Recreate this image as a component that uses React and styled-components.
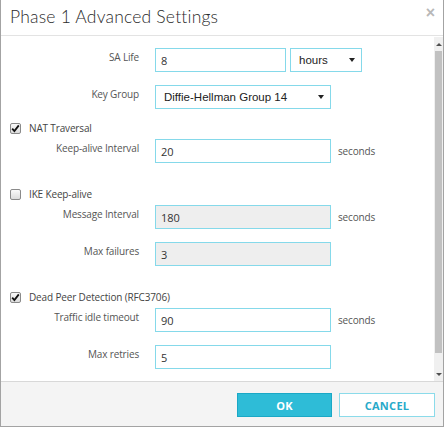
import React from "react";
import styled, { createGlobalStyle } from "styled-components";

const GlobalStyle = createGlobalStyle`
  html, body {
    margin: 0;
    padding: 0;
    background: #fff;
  }
  body {
    font-family: "Open Sans", "Liberation Sans", sans-serif;
  }
`;

const Dialog = styled.div`
  width: 444px;
  height: 427px;
  box-sizing: border-box;
  border: 1px solid #a3a3a3;
  border-top: none;
  display: flex;
  flex-direction: column;
  background: #fff;
`;

const Header = styled.div`
  height: 36px;
  flex: none;
  box-sizing: border-box;
  border-bottom: 1px solid #e3e3e3;
  display: flex;
  align-items: center;
  justify-content: space-between;
  padding: 0 8px 2px 9px;
`;

const Title = styled.h1`
  margin: 0;
  font-family: "Lato", "Open Sans", sans-serif;
  font-weight: 300;
  font-size: 17.5px;
  color: #2a2a2a;
  letter-spacing: 0.2px;
`;

const Close = styled.span`
  font-family: "Liberation Sans", sans-serif;
  font-size: 16px;
  font-weight: 700;
  color: #b8b8b8;
  margin-top: -8px;
`;

const Middle = styled.div`
  flex: 1;
  display: flex;
  min-height: 0;
`;

const Content = styled.div`
  flex: 1;
  padding-top: 12px;
`;

const ScrollBar = styled.div`
  width: 9px;
  flex: none;
  display: flex;
  flex-direction: column;
  background: #f0f0f0;
  margin-top: 1px;
`;

const ScrollBtn = styled.div`
  height: 14px;
  display: flex;
  align-items: center;
  justify-content: center;
  background: #f0f0f0;
  &::after {
    content: "";
    border-left: 3px solid transparent;
    border-right: 3px solid transparent;
    ${(p) =>
      p.$down
        ? "border-top: 3px solid #505050;"
        : "border-bottom: 3px solid #505050;"}
  }
`;

const Thumb = styled.div`
  height: 302px;
  background: #c1c1c1;
  margin: 0 1px 0 1px;
`;

const Track = styled.div`
  flex: 1;
`;

const Row = styled.div`
  display: flex;
  align-items: center;
  height: 24px;
  margin-top: ${(p) => p.$gap ?? 13}px;
`;

const Label = styled.label`
  width: 138px;
  margin-right: 16px;
  text-align: right;
  font-size: 10px;
  letter-spacing: -0.15px;
  color: #555;
  flex: none;
  margin-top: -6px;
`;

const Input = styled.div`
  width: ${(p) => p.$w ?? 176}px;
  height: 24px;
  box-sizing: border-box;
  border: 1px solid #85d9ea;
  background: ${(p) => (p.$disabled ? "#eeeeee" : "#fff")};
  display: flex;
  align-items: center;
  padding-left: 5px;
  font-size: 11px;
  color: #333;
`;

const Select = styled(Input)`
  padding: 0 6px 0 8px;
  justify-content: space-between;
  margin-left: ${(p) => p.$ml ?? 0}px;
  font-family: "Liberation Sans", sans-serif;
  font-size: 11.5px;
  color: #222;
  &::after {
    content: "";
    border-left: 3px solid transparent;
    border-right: 3px solid transparent;
    border-top: 4px solid #222;
  }
`;

const Unit = styled.span`
  margin-left: 7px;
  font-size: 10px;
  letter-spacing: -0.15px;
  color: #555;
`;

const CheckRow = styled.div`
  display: flex;
  align-items: center;
  height: 18px;
  margin-top: ${(p) => p.$gap}px;
  margin-bottom: 2px;
  padding-left: 9px;
  font-size: 10px;
  letter-spacing: -0.15px;
  color: #444;
`;

const Box = styled.span`
  width: 11px;
  height: 11px;
  box-sizing: border-box;
  border: 1px solid #8a8a8a;
  border-radius: 2px;
  background: linear-gradient(#fafafa, #dcdcdc);
  margin-right: 8px;
  display: flex;
  align-items: center;
  justify-content: center;
`;

const Footer = styled.div`
  height: 45px;
  flex: none;
  box-sizing: border-box;
  border-top: 1px solid #d8d8d8;
  background: #f4f4f4;
  display: flex;
  justify-content: flex-end;
  align-items: flex-start;
  gap: 7px;
  padding: 11px 8px 0 0;
`;

const Button = styled.button`
  width: ${(p) => (p.$primary ? 95 : 96)}px;
  height: 24px;
  box-sizing: border-box;
  border: 1px solid ${(p) => (p.$primary ? "#1aa8c6" : "#8bdbea")};
  background: ${(p) => (p.$primary ? "#2ebcd7" : "#fff")};
  color: ${(p) => (p.$primary ? "#fff" : "#27a9c9")};
  font-family: "Open Sans", sans-serif;
  font-weight: 700;
  font-size: 11px;
  letter-spacing: 0.3px;
  padding: 0;
`;

const Check = ({ checked }) => (
  <Box>
    {checked && (
      <svg width="9" height="9" viewBox="0 0 9 9">
        <path d="M1.2 4.6 L3.4 7 L7.8 1.4" fill="none" stroke="#111" strokeWidth="1.8" />
      </svg>
    )}
  </Box>
);

const Field = ({ label, value, unit, disabled, gap }) => (
  <Row $gap={gap}>
    <Label>{label}</Label>
    <Input $disabled={disabled}>{value}</Input>
    {unit && <Unit>{unit}</Unit>}
  </Row>
);

export default function App() {
  return (
    <>
      <GlobalStyle />
      <Dialog>
        <Header>
          <Title>Phase 1 Advanced Settings</Title>
          <Close>×</Close>
        </Header>
        <Middle>
          <Content>
            <Row $gap={0}>
              <Label>SA Life</Label>
              <Input $w={131}>8</Input>
              <Select $w={72} $ml={4}>hours</Select>
            </Row>
            <Row>
              <Label>Key Group</Label>
              <Select>Diffie-Hellman Group 14</Select>
            </Row>

            <CheckRow $gap={10}>
              <Check checked />
              NAT Traversal
            </CheckRow>
            <Field gap={0} label="Keep-alive Interval" value="20" unit="seconds" />

            <CheckRow $gap={22}>
              <Check />
              IKE Keep-alive
            </CheckRow>
            <Field gap={0} label="Message Interval" value="180" unit="seconds" disabled />
            <Field label="Max failures" value="3" disabled />

            <CheckRow $gap={22}>
              <Check checked />
              Dead Peer Detection (RFC3706)
            </CheckRow>
            <Field gap={0} label="Traffic idle timeout" value="90" unit="seconds" />
            <Field label="Max retries" value="5" />
          </Content>
          <ScrollBar>
            <ScrollBtn />
            <Thumb />
            <Track />
            <ScrollBtn $down />
          </ScrollBar>
        </Middle>
        <Footer>
          <Button $primary>OK</Button>
          <Button>CANCEL</Button>
        </Footer>
      </Dialog>
    </>
  );
}
